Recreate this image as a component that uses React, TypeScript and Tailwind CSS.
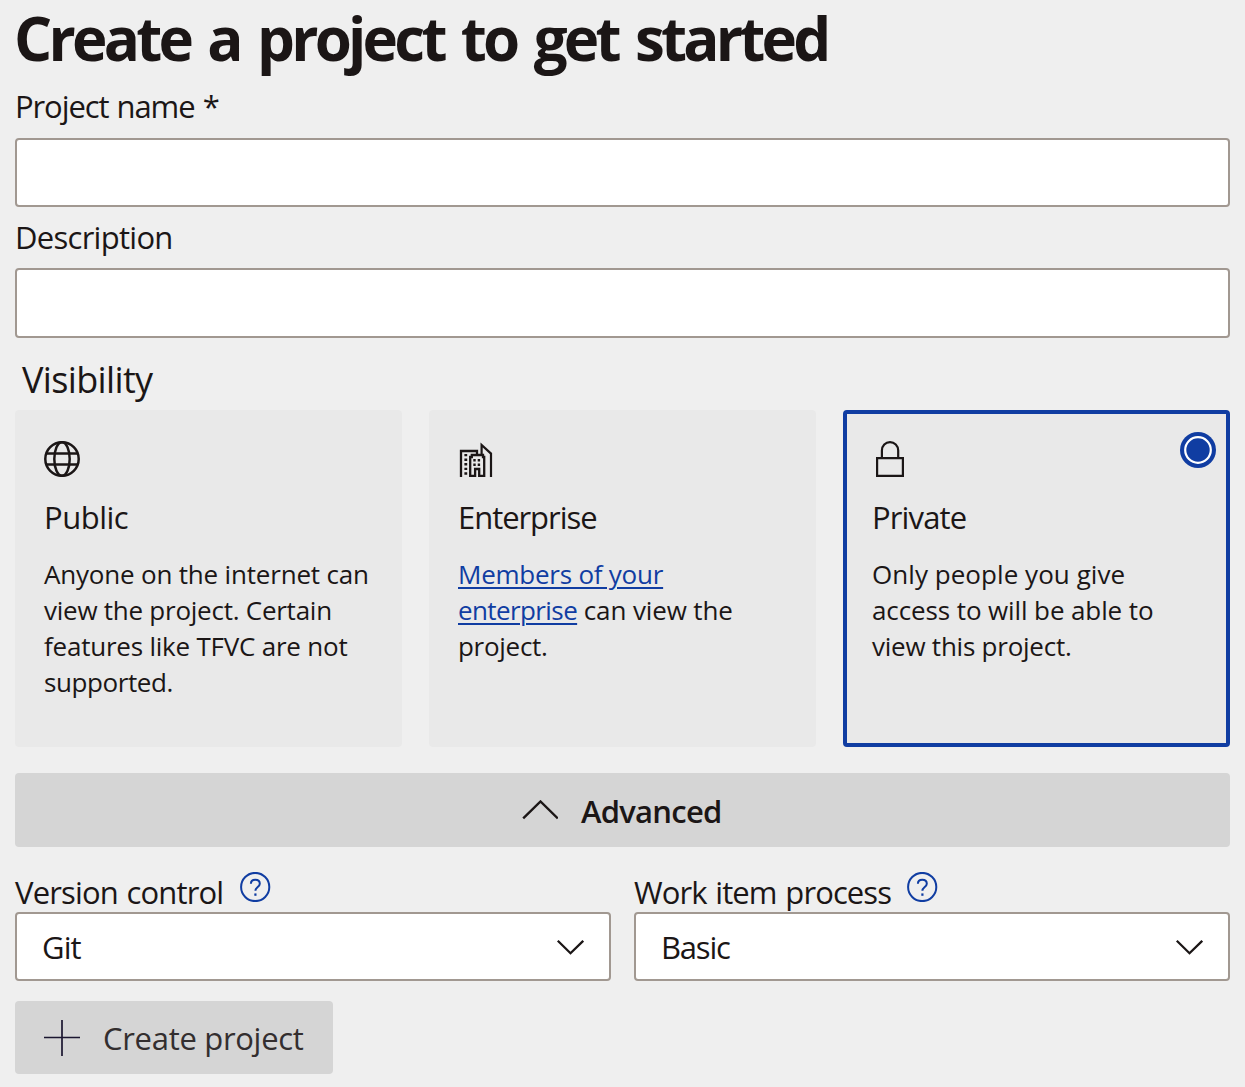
import React from "react";

const ink = "text-[#1b1616]";

function GlobeIcon() {
  return (
    <svg width="36" height="36" viewBox="0 0 36 36" fill="none" stroke="#1b1616" strokeWidth="2.5">
      <circle cx="18" cy="18" r="16.7" />
      <path d="M18 1.2C13.5 1.2 10.3 9 10.3 18S13.5 34.8 18 34.8 25.7 27 25.7 18 22.5 1.2 18 1.2Z" />
      <path d="M2.5 12.5H33.5M2.5 23.5H33.5" />
    </svg>
  );
}

function EnterpriseIcon() {
  return (
    <svg width="36" height="36" viewBox="0 0 36 36" fill="none" stroke="#1b1616" strokeWidth="2">
      <path d="M3 36V10H19V14" strokeWidth="2.3" />
      <path d="M23.6 13V4L33 12.6V36" strokeWidth="2.2" />
      <path d="M12.2 34.9V16H13.8V14H25V16H26.2V34.9H21.2V28H17.1V34.9Z" strokeWidth="2.3" />
      <path d="M7.8 12.9V34" strokeWidth="2.8" strokeDasharray="2.4 2.2" />
      <path d="M15.3 19.3H23.5M15.3 23.7H23.5" strokeWidth="2.4" strokeDasharray="2.4 2" />
    </svg>
  );
}

function LockIcon() {
  return (
    <svg width="28" height="36" viewBox="0 0 28 36" fill="none" stroke="#1b1616" strokeWidth="2.2">
      <path d="M1.1 17.1H26.9V34.9H1.1Z" />
      <path d="M5.9 17V9.5C5.9 4.8 9.5 1.1 14 1.1S22.2 4.8 22.2 9.5V17" />
    </svg>
  );
}

function HelpIcon() {
  return (
    <svg width="31" height="30" viewBox="0 0 31 30" fill="none" stroke="#103da2" strokeWidth="2">
      <circle cx="15.2" cy="15" r="14.1" />
      <path d="M10.9 11.8C10.9 9.3 12.7 7.8 15.3 7.8S19.8 9.3 19.8 11.7C19.8 14.9 15.4 15.1 15.4 18.8" />
      <path d="M15.4 21.4V23.8" strokeWidth="2.2" />
    </svg>
  );
}

function ChevronDown() {
  return (
    <svg width="28" height="16" viewBox="0 0 28 16" fill="none" stroke="#1b1616" strokeWidth="2.3">
      <path d="M1.8 1.8L14.5 14.2L27.2 1.8" />
    </svg>
  );
}

function Select({ value, spacing }: { value: string; spacing: string }) {
  return (
    <div className="flex h-[69px] items-center justify-between rounded-[4px] border-2 border-[#a19891] bg-white pr-[25px] pl-[25px]">
      <span className={`mt-px text-[31px] leading-10 ${spacing}`}>{value}</span>
      <ChevronDown />
    </div>
  );
}

const body = "mt-[19px] text-[26px] leading-[36px] whitespace-nowrap";
const heading = "mt-5 text-[31px] leading-10";

export default function App() {
  return (
    <div className={`flow-root h-[1087px] w-[1245px] bg-[#efefef] px-[15px] font-['Open_Sans','Noto_Sans',sans-serif] ${ink}`}>
      <h1 className="-ml-px text-[60px] leading-[77px] font-bold tracking-[-3.75px] whitespace-nowrap [word-spacing:5.3px]">
        Create a project to get started
      </h1>

      <label className="mb-0.5 block text-[31px] leading-[59px] tracking-[-1.1px] [word-spacing:1.2px]">Project name *</label>
      <input className="block h-[69px] w-full rounded-[4px] border-2 border-[#a19891] bg-white" />
      <label className="mb-px block text-[31px] leading-[60px] tracking-[-0.72px]">Description</label>
      <input className="block h-[70px] w-full rounded-[4px] border-2 border-[#a19891] bg-white" />

      <h2 className="mt-3 ml-[7px] text-[36px] leading-[60px] tracking-[-0.65px]">Visibility</h2>

      <div className="grid grid-cols-3 gap-[27px]">
        <section className="h-[337px] rounded-[4px] bg-[#e9e9e9] pt-[31px] pl-[29px]">
          <GlobeIcon />
          <h3 className={`${heading} tracking-[-0.5px]`}>Public</h3>
          <p className={body}>
            <span className="block tracking-[-0.19px]">Anyone on the internet can</span>
            <span className="block tracking-[-0.25px]">view the project. Certain</span>
            <span className="block tracking-[-0.22px]">features like TFVC are not</span>
            <span className="block tracking-[-0.42px]">supported.</span>
          </p>
        </section>

        <section className="h-[337px] rounded-[4px] bg-[#e9e9e9] pt-[31px] pl-[29px]">
          <EnterpriseIcon />
          <h3 className={`${heading} tracking-[-1.05px]`}>Enterprise</h3>
          <p className={body}>
            <span className="block">
              <a className="tracking-[-0.24px] text-[#103da2] underline decoration-2 underline-offset-[3px]">Members of your</a>
            </span>
            <span className="block">
              <a className="tracking-[-0.6px] text-[#103da2] underline decoration-2 underline-offset-[3px]">enterprise</a>
              <span className="tracking-[-0.12px]"> can view the</span>
            </span>
            <span className="block tracking-[-0.29px]">project.</span>
          </p>
        </section>

        <section className="relative h-[337px] rounded-[4px] border-4 border-[#103da2] bg-[#e9e9e9] pt-[27px] pl-[25px]">
          <div className="ml-1">
            <LockIcon />
          </div>
          <h3 className={`${heading} tracking-[-0.85px]`}>Private</h3>
          <p className={body}>
            <span className="block tracking-[0.05px]">Only people you give</span>
            <span className="block tracking-[-0.11px]">access to will be able to</span>
            <span className="block tracking-[-0.24px]">view this project.</span>
          </p>
          <svg className="absolute top-[18px] right-[10px]" width="36" height="36" viewBox="0 0 36 36">
            <circle cx="18" cy="18" r="18" fill="#103da2" />
            <circle cx="18" cy="18" r="12.8" fill="none" stroke="#fff" strokeWidth="2.2" />
          </svg>
        </section>
      </div>

      <button className="mt-[26px] flex h-[74px] w-full items-center rounded-[4px] bg-[#d5d5d5] pl-[507px]">
        <svg width="36" height="20" viewBox="0 0 36 20" fill="none" stroke="#1b1616" strokeWidth="2.4">
          <path d="M1.2 18.4L18.5 1.5L35.8 18.4" />
        </svg>
        <span className="mt-0.5 ml-[23px] text-[31px] leading-10 font-semibold tracking-[-0.75px]">Advanced</span>
      </button>

      <div className="mt-[25px] grid grid-cols-2 gap-[23px]">
        <div>
          <div className="flex h-10 items-start">
            <label className="w-[225px] text-[31px] leading-10 tracking-[-0.85px] whitespace-nowrap [word-spacing:1.5px]">Version control</label>
            <HelpIcon />
          </div>
          <Select value="Git" spacing="tracking-[-0.9px]" />
        </div>
        <div>
          <div className="flex h-10 items-start">
            <label className="w-[273px] text-[31px] leading-10 tracking-[-0.9px] whitespace-nowrap [word-spacing:1.5px]">Work item process</label>
            <HelpIcon />
          </div>
          <Select value="Basic" spacing="tracking-[-1.2px]" />
        </div>
      </div>

      <button className="mt-5 flex h-[73px] w-[318px] items-center rounded-[4px] bg-[#d5d5d5] pl-[29px]">
        <svg width="36" height="36" viewBox="0 0 36 36" fill="none" stroke="#1b1630" strokeWidth="1.7">
          <path d="M0 17.5H36M18 0V36" />
        </svg>
        <span className="mt-px ml-[23px] text-[31px] leading-10 tracking-[-0.3px] text-[#332e2f]">Create project</span>
      </button>
    </div>
  );
}
